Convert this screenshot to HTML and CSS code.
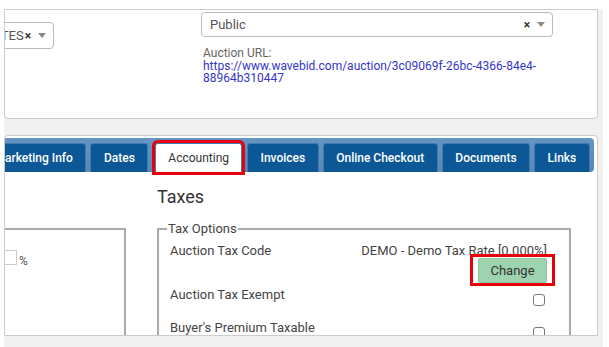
FILE: index.html
```html
<!DOCTYPE html>
<html lang="en">
<head>
    <meta charset="UTF-8">
    <meta name="viewport" content="width=device-width, initial-scale=1.0">
    <title>Auction - Accounting</title>
    <link rel="stylesheet" href="styles.css">
</head>
<body>
    <div class="pagina">
        <div class="panel panel-arriba">
            <div class="col-izq">
                <div class="selector selector-corto">
                    <span class="selector-texto">STATES</span>
                    <span class="selector-borrar">×</span>
                    <span class="selector-flecha"></span>
                </div>
            </div>
            <div class="col-der">
                <div class="selector selector-ancho">
                    <span class="selector-texto">Public</span>
                    <span class="selector-borrar">×</span>
                    <span class="selector-flecha"></span>
                </div>
                <div class="url-etiqueta">Auction URL:</div>
                <a class="url-enlace" href="#">https://www.wavebid.com/auction/3c09069f-26bc-4366-84e4-88964b310447</a>
            </div>
        </div>

        <div class="panel panel-principal">
            <ul class="pestanas">
                <li class="pestana primera">Marketing Info</li>
                <li class="pestana">Dates</li>
                <li class="pestana activa">Accounting</li>
                <li class="pestana">Invoices</li>
                <li class="pestana">Online Checkout</li>
                <li class="pestana">Documents</li>
                <li class="pestana">Links</li>
            </ul>

            <div class="contenido">
                <h2 class="titulo">Taxes</h2>
                <fieldset class="caja caja-izq">
                    <input class="porcentaje" type="text"><span class="signo">%</span>
                </fieldset>
                <fieldset class="caja opciones">
                    <legend>Tax Options</legend>
                    <div class="fila">
                        <span class="etiqueta">Auction Tax Code</span>
                        <div class="valor">
                            <span class="valor-texto">DEMO - Demo Tax Rate [0.000%]</span>
                            <button class="cambiar">Change</button>
                        </div>
                    </div>
                    <div class="fila fila-2">
                        <span class="etiqueta">Auction Tax Exempt</span>
                        <input class="casilla" type="checkbox">
                    </div>
                    <div class="fila fila-3">
                        <span class="etiqueta">Buyer's Premium Taxable</span>
                        <input class="casilla" type="checkbox">
                    </div>
                </fieldset>
            </div>
        </div>
    </div>
</body>
</html>
```

FILE: styles.css
```css
body {
    margin: 0;
    background: #ffffff;
    font-family: Roboto, "Liberation Sans", sans-serif;
    overflow: hidden;
}
.pagina {
    margin: 9px 0 0 4px;
    width: 594px;
    padding-right: 5px;
    height: 340px;
    background: #f1f1f1;
}
.panel {
    background: #ffffff;
    border: 1px solid #cccccc;
    border-radius: 4px;
    overflow: hidden;
}
.panel-arriba {
    display: flex;
    height: 106px;
    padding-top: 2px;
    border-top-left-radius: 0;
    border-top-right-radius: 0;
}
.col-izq {
    margin-left: -21px;
}
.col-der {
    margin-left: 147px;
}
.selector {
    display: flex;
    align-items: center;
    box-sizing: border-box;
    background: #ffffff;
    border: 1px solid #bbbbbb;
    border-radius: 4px;
    overflow: hidden;
    font-size: 13px;
    color: #555555;
}
.selector-corto {
    width: 70px;
    height: 27px;
    margin-top: 10px;
    justify-content: flex-end;
    padding-right: 7px;
}
.selector-ancho {
    width: 352px;
    height: 25px;
    padding: 0 7px 0 8px;
}
.selector-ancho .selector-texto {
    flex: 1;
}
.selector-borrar {
    font-size: 12px;
    font-weight: bold;
    color: #333333;
    margin-left: 1px;
}
.selector-flecha {
    width: 0;
    height: 0;
    border-top: 5px solid #888888;
    border-left: 4px solid transparent;
    border-right: 4px solid transparent;
    margin-left: 7px;
}
.url-etiqueta {
    margin-top: 9px;
    padding-left: 2px;
    font-size: 12px;
    line-height: 14px;
    color: #666666;
}
.url-enlace {
    display: block;
    width: 350px;
    padding-left: 2px;
    font-size: 12px;
    line-height: 12px;
    color: #3535c9;
    text-decoration: none;
}
.panel-principal {
    margin-top: 16px;
    height: 199px;
    border-bottom-left-radius: 0;
    border-bottom-right-radius: 0;
}
.pestanas {
    display: flex;
    align-items: flex-end;
    gap: 4px;
    list-style: none;
    height: 34px;
    box-sizing: border-box;
    margin: 2px 3px 0 0;
    padding: 5px 0 0 0;
    background: linear-gradient(#6596c3, #5887b5);
    border-radius: 0 4px 4px 0;
}
.pestana {
    flex-shrink: 0;
    height: 29px;
    box-sizing: border-box;
    line-height: 28px;
    padding: 0 12.5px;
    background: #0c5896;
    border: 1px solid #4579aa;
    border-bottom: none;
    border-radius: 3px 3px 0 0;
    font-size: 12px;
    font-weight: 500;
    color: #ffffff;
    white-space: nowrap;
}
.pestana.primera {
    margin-left: -24px;
}
.pestana.activa {
    background: #ffffff;
    color: #333333;
    font-weight: 400;
    padding: 0 12px;
    margin: 0 1px 0 3px;
    outline: 3px solid #e8000b;
}
.contenido {
    display: grid;
    grid-template-columns: 121px 414px;
    column-gap: 31px;
    row-gap: 13px;
    padding-top: 14px;
}
.titulo {
    grid-column: 2;
    grid-row: 1;
    margin: 0;
    font-size: 18px;
    line-height: 22px;
    font-weight: 400;
    color: #333333;
}
.caja {
    margin: 0;
    min-width: 0;
    border: 2px solid #aaaaaa;
    height: 150px;
    box-sizing: border-box;
}
.caja-izq {
    grid-column: 1;
    grid-row: 2;
    margin: 7px 0 0 -40px;
    padding: 20px 0 0 12px;
}
.porcentaje {
    width: 38px;
    height: 15px;
    box-sizing: border-box;
    margin: 0;
    padding: 0;
    border: 1px solid #cccccc;
    vertical-align: top;
}
.signo {
    margin-left: 2px;
    font-size: 12px;
    line-height: 15px;
    color: #555555;
}
.opciones {
    grid-column: 2;
    grid-row: 2;
    padding: 7px 22px 0 11px;
}
.opciones legend {
    margin-left: -3px;
    padding: 0 1px;
    font-size: 13px;
    line-height: 15px;
    color: #444444;
}
.fila {
    display: flex;
    justify-content: space-between;
    align-items: flex-start;
    font-size: 13px;
    color: #444444;
}
.etiqueta {
    line-height: 16px;
}
.valor {
    display: flex;
    flex-direction: column;
    align-items: flex-end;
}
.valor-texto {
    line-height: 15px;
}
.cambiar {
    position: relative;
    width: 69px;
    height: 25px;
    background: #9ed3af;
    border: 1px solid #8cc49d;
    border-radius: 2px;
    font-family: Roboto, "Liberation Sans", sans-serif;
    font-size: 13px;
    color: #333333;
    padding: 0;
}
.cambiar::after {
    content: "";
    position: absolute;
    left: -9px;
    right: -9px;
    top: -5px;
    bottom: -4px;
    border: 3px solid #e8000b;
}
.fila-2 {
    margin-top: 4px;
}
.fila-3 {
    margin-top: 14px;
}
.casilla {
    appearance: none;
    width: 12px;
    height: 12px;
    margin: 7px 2px 0 0;
    border: 1px solid #777777;
    border-radius: 3px;
    background: #ffffff;
}
```
